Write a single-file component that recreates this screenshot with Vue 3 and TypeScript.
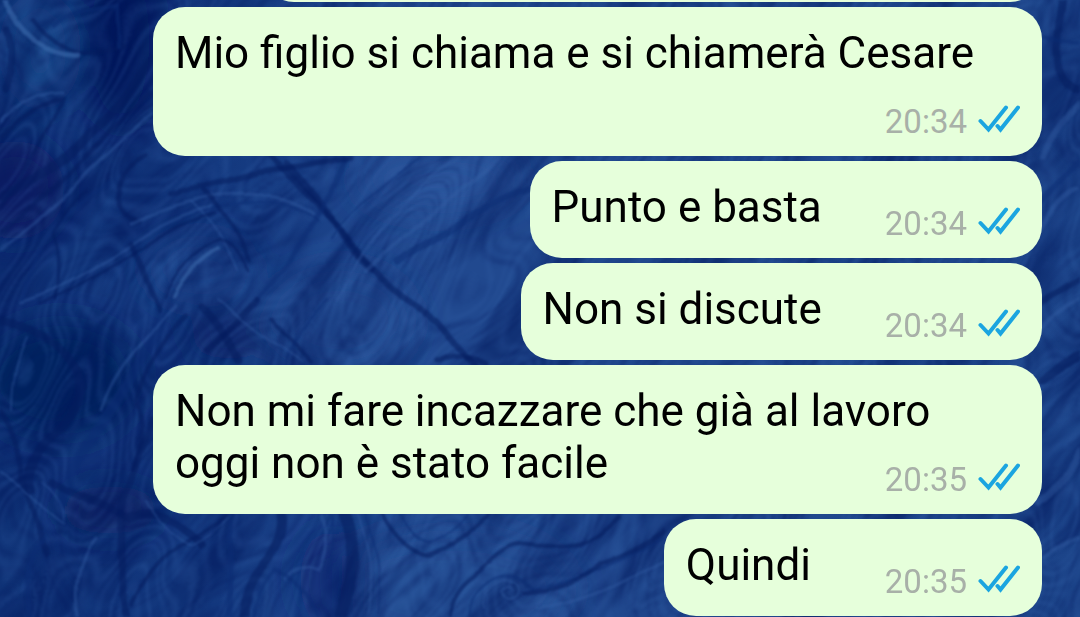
<script setup lang="ts">
interface Message {
  id: number
  text: string
  time: string
}

interface Stroke {
  d: string
  tone: 'dark' | 'deep' | 'light' | 'pale'
  width: number
}

const messages: Message[] = [
  { id: 1, text: 'Mio figlio si chiama e si chiamerà Cesare', time: '20:34' },
  { id: 2, text: 'Punto e basta', time: '20:34' },
  { id: 3, text: 'Non si discute', time: '20:34' },
  { id: 4, text: 'Non mi fare incazzare che già al lavoro oggi non è stato facile', time: '20:35' },
  { id: 5, text: 'Quindi\u00a0', time: '20:35' },
]

const strokes: Stroke[] = [
  // long diagonal vein and its branches
  { d: 'M268 150 Q292 176 322 214 Q350 240 385 276 Q420 305 450 342 L476 364', tone: 'deep', width: 6 },
  { d: 'M290 165 Q306 186 330 222 Q350 244 375 268', tone: 'deep', width: 7 },
  { d: 'M345 158 Q330 190 312 220 Q292 260 255 300', tone: 'dark', width: 5 },
  { d: 'M255 300 Q235 325 210 350', tone: 'deep', width: 6 },
  { d: 'M435 362 Q460 348 488 362', tone: 'deep', width: 5 },
  { d: 'M270 320 L308 362', tone: 'deep', width: 4 },
  { d: 'M330 300 Q300 330 286 360', tone: 'dark', width: 3 },
  // upper left sweeps
  { d: 'M152 60 Q120 110 85 140 Q55 175 0 200', tone: 'deep', width: 9 },
  { d: 'M150 92 Q100 140 68 176 Q35 205 0 236', tone: 'deep', width: 4 },
  { d: 'M152 112 Q100 155 70 190 Q40 222 0 250', tone: 'light', width: 3 },
  { d: 'M0 138 Q35 102 62 98 Q52 122 40 148 Q20 180 0 210', tone: 'deep', width: 4 },
  { d: 'M0 122 Q30 90 62 92', tone: 'light', width: 3 },
  { d: 'M35 20 Q58 48 80 52 Q105 52 124 48', tone: 'deep', width: 4 },
  { d: 'M5 0 Q20 26 38 42 Q60 56 78 54', tone: 'pale', width: 5 },
  { d: 'M55 25 Q68 10 116 8 L118 48', tone: 'dark', width: 4 },
  { d: 'M10 30 Q20 60 5 90', tone: 'deep', width: 7 },
  // folds beside the first bubble
  { d: 'M145 155 Q120 165 118 200 Q120 212 138 218', tone: 'deep', width: 5 },
  { d: 'M170 192 Q220 182 260 172 Q310 168 350 156', tone: 'deep', width: 5 },
  { d: 'M130 220 Q190 195 240 190 Q285 192 310 214', tone: 'light', width: 3 },
  { d: 'M150 230 Q195 208 240 200 Q290 196 315 222', tone: 'dark', width: 2 },
  { d: 'M200 190 Q240 220 248 260', tone: 'deep', width: 4 },
  { d: 'M190 200 Q225 225 236 270', tone: 'light', width: 2 },
  { d: 'M22 300 Q28 250 70 210 Q95 190 110 180', tone: 'dark', width: 4 },
  { d: 'M55 300 Q62 260 52 235 Q62 205 86 190', tone: 'deep', width: 3 },
  { d: 'M40 304 Q90 285 140 248 Q180 220 215 212', tone: 'deep', width: 3 },
  { d: 'M20 302 Q90 280 135 240 Q170 215 210 205', tone: 'light', width: 3 },
  { d: 'M130 242 Q145 280 158 312', tone: 'deep', width: 5 },
  { d: 'M165 300 Q180 260 222 240 Q240 245 246 270', tone: 'deep', width: 3 },
  { d: 'M175 300 Q190 268 220 250', tone: 'pale', width: 4 },
  { d: 'M500 158 Q430 210 370 270', tone: 'light', width: 4 },
  { d: 'M460 158 Q390 200 340 300', tone: 'light', width: 3 },
  { d: 'M530 190 Q470 210 400 260', tone: 'dark', width: 7 },
  { d: 'M420 158 Q360 190 330 240', tone: 'dark', width: 2 },
  // middle left tangle
  { d: 'M0 320 Q40 330 70 370 Q90 400 60 430 Q20 460 28 490', tone: 'deep', width: 9 },
  { d: 'M160 320 Q130 380 90 440 Q70 470 60 500', tone: 'dark', width: 10 },
  { d: 'M185 320 Q150 350 135 400 Q148 440 134 470', tone: 'deep', width: 5 },
  { d: 'M175 310 Q120 350 100 410', tone: 'light', width: 3 },
  { d: 'M25 340 Q10 370 10 410', tone: 'light', width: 2 },
  { d: 'M200 310 Q230 335 242 362', tone: 'deep', width: 7 },
  { d: 'M215 300 Q250 330 300 362', tone: 'light', width: 2 },
  { d: 'M0 410 Q20 440 20 480 Q30 520 48 555', tone: 'deep', width: 5 },
  { d: 'M0 470 Q40 510 60 525 Q65 500 40 480', tone: 'light', width: 2 },
  // lower left veins
  { d: 'M152 420 Q142 460 124 500 Q112 560 128 617', tone: 'deep', width: 7 },
  { d: 'M50 480 Q90 500 128 520 Q160 500 200 545', tone: 'deep', width: 8 },
  { d: 'M132 605 Q150 560 185 540 Q210 530 225 515', tone: 'deep', width: 4 },
  { d: 'M145 502 Q170 540 190 545 Q215 535 230 515', tone: 'light', width: 2 },
  { d: 'M30 617 Q25 570 42 540', tone: 'dark', width: 5 },
  { d: 'M80 617 Q70 570 95 540', tone: 'light', width: 3 },
  { d: 'M230 515 Q232 560 230 617', tone: 'dark', width: 5 },
  { d: 'M280 515 Q284 540 262 566 Q245 590 244 617', tone: 'deep', width: 9 },
  { d: 'M345 515 Q365 560 340 617', tone: 'deep', width: 13 },
  { d: 'M320 515 Q332 540 318 567 Q300 560 284 578', tone: 'light', width: 3 },
  { d: 'M332 515 Q336 545 328 575', tone: 'dark', width: 2 },
  { d: 'M358 515 Q382 560 368 617', tone: 'light', width: 2 },
  { d: 'M366 515 Q390 565 378 617', tone: 'dark', width: 2 },
  { d: 'M252 617 Q262 580 275 570 Q300 580 315 617', tone: 'dark', width: 4 },
  // lower centre rings
  { d: 'M384 513 Q405 550 430 556 Q450 550 490 513', tone: 'deep', width: 4 },
  { d: 'M402 513 Q415 540 432 543 Q450 538 470 513', tone: 'dark', width: 2 },
  { d: 'M448 617 Q450 592 472 577 Q500 543 520 542 Q550 546 580 542 Q600 535 620 515', tone: 'deep', width: 4 },
  { d: 'M468 617 Q468 592 494 578 Q518 570 536 590 Q580 580 664 536', tone: 'dark', width: 3 },
  { d: 'M528 595 Q570 590 600 562 Q630 552 664 530', tone: 'deep', width: 5 },
  { d: 'M484 610 Q478 588 504 580 Q528 582 520 598 Q508 606 502 592 Q512 584 516 592', tone: 'light', width: 2 },
  { d: 'M540 610 Q600 600 664 560', tone: 'light', width: 3 },
  // right margin
  { d: 'M1062 0 Q1056 40 1060 70 Q1066 86 1080 90', tone: 'deep', width: 8 },
  { d: 'M1044 38 Q1060 44 1080 44', tone: 'dark', width: 4 },
  { d: 'M1042 160 Q1056 120 1080 100', tone: 'light', width: 6 },
  { d: 'M1030 212 Q1060 190 1080 160', tone: 'dark', width: 6 },
  { d: 'M1042 230 Q1060 200 1080 190', tone: 'light', width: 5 },
  { d: 'M1030 310 Q1056 292 1080 280', tone: 'deep', width: 6 },
  { d: 'M1040 330 Q1060 310 1080 300', tone: 'light', width: 4 },
  { d: 'M1042 380 Q1060 365 1080 352', tone: 'deep', width: 9 },
  { d: 'M1040 500 Q1060 490 1080 450', tone: 'light', width: 7 },
  { d: 'M1042 560 Q1060 545 1080 540', tone: 'light', width: 4 },
]
</script>

<template>
  <main class="chat">
    <svg class="wallpaper" viewBox="0 0 1080 617" preserveAspectRatio="xMidYMid slice" aria-hidden="true">
      <defs>
        <linearGradient id="base" x1="0" y1="0" x2="1" y2="0">
          <stop offset="0" stop-color="#0f3276" />
          <stop offset="0.2" stop-color="#14397f" />
          <stop offset="0.4" stop-color="#21498f" />
          <stop offset="0.7" stop-color="#21498e" />
          <stop offset="1" stop-color="#1c4489" />
        </linearGradient>
        <filter id="soft" x="-50%" y="-50%" width="200%" height="200%">
          <feGaussianBlur stdDeviation="16" />
        </filter>
        <filter id="ink" x="0" y="0" width="1080" height="617" filterUnits="userSpaceOnUse" color-interpolation-filters="sRGB">
          <feTurbulence type="fractalNoise" baseFrequency="0.012" numOctaves="2" seed="4" result="warp" />
          <feDisplacementMap in="SourceGraphic" in2="warp" scale="14" xChannelSelector="R" yChannelSelector="G" />
          <feGaussianBlur stdDeviation="1" />
        </filter>
        <filter id="fibres" x="-600" y="-600" width="2300" height="1900" filterUnits="userSpaceOnUse" color-interpolation-filters="sRGB">
          <feTurbulence type="fractalNoise" baseFrequency="0.006 0.024" numOctaves="4" seed="11" />
          <feColorMatrix values="0 0 0 0 0.01  0 0 0 0 0.1  0 0 0 0 0.36  3 0 0 0 -1.25" />
        </filter>
        <filter id="marble" x="-600" y="-600" width="2300" height="1900" filterUnits="userSpaceOnUse" color-interpolation-filters="sRGB">
          <feTurbulence type="fractalNoise" baseFrequency="0.004 0.009" numOctaves="2" seed="23" />
          <feColorMatrix values="0 0 0 0 0.01  0 0 0 0 0.09  0 0 0 0 0.36  2 0 0 0 -0.5" />
          <feComponentTransfer>
            <feFuncA type="table" tableValues="0 0 1 0 0 0.7 0 0.9 0 0 0 1 0 0.6 0 0 0.9 0 0 0.6 0 1 0 0 0 0.8 0 0.7 0 0 1 0 0" />
          </feComponentTransfer>
          <feGaussianBlur stdDeviation="1" />
        </filter>
        <filter id="sheen" x="-600" y="-600" width="2300" height="1900" filterUnits="userSpaceOnUse" color-interpolation-filters="sRGB">
          <feTurbulence type="fractalNoise" baseFrequency="0.005 0.012" numOctaves="2" seed="7" />
          <feColorMatrix values="0 0 0 0 0.22  0 0 0 0 0.4  0 0 0 0 0.68  2 0 0 0 -0.5" />
          <feComponentTransfer>
            <feFuncA type="table" tableValues="0 0.8 0 0 1 0 0 0 0.7 0 0.9 0 0 1 0 0.6 0 0 0.8 0 0 1 0 0.6 0 0" />
          </feComponentTransfer>
          <feGaussianBlur stdDeviation="1" />
        </filter>
      </defs>
      <rect width="1080" height="617" fill="url(#base)" />
      <g filter="url(#soft)">
        <ellipse cx="120" cy="40" rx="40" ry="90" fill="#04195a" />
        <ellipse cx="40" cy="50" rx="26" ry="50" fill="#1f4f92" />
        <ellipse cx="15" cy="190" rx="50" ry="50" fill="#071f63" />
        <ellipse cx="60" cy="380" rx="80" ry="60" fill="#06215f" />
        <ellipse cx="230" cy="335" rx="40" ry="24" fill="#0a2769" />
        <ellipse cx="110" cy="510" rx="50" ry="24" fill="#082262" />
        <ellipse cx="200" cy="270" rx="50" ry="30" fill="#214b92" />
        <ellipse cx="340" cy="320" rx="70" ry="50" fill="#265197" />
        <ellipse cx="440" cy="180" rx="80" ry="30" fill="#2a549b" />
        <ellipse cx="450" cy="590" rx="120" ry="60" fill="#265196" />
        <ellipse cx="330" cy="580" rx="30" ry="50" fill="#082870" />
      </g>
      <g transform="rotate(-52 300 300)" opacity="0.5">
        <rect x="-600" y="-600" width="2300" height="1900" filter="url(#fibres)" />
      </g>
      <g transform="rotate(-50 300 300)" opacity="0.26">
        <rect x="-600" y="-600" width="2300" height="1900" filter="url(#marble)" />
      </g>
      <g transform="rotate(-62 300 300)" opacity="0.24">
        <rect x="-600" y="-600" width="2300" height="1900" filter="url(#sheen)" />
      </g>
      <g filter="url(#ink)" fill="none" stroke-linecap="round">
        <path
          v-for="(stroke, index) in strokes"
          :key="index"
          :d="stroke.d"
          :class="['vein', stroke.tone]"
          :stroke-width="stroke.width"
        />
      </g>
    </svg>

    <div class="previous" aria-hidden="true"><div class="bubble previous-bubble"></div></div>

    <ol class="thread">
      <li v-for="message in messages" :key="message.id" class="bubble">
        <span class="text">{{ message.text }}</span>
        <span class="meta">
          <time>{{ message.time }}</time>
          <svg class="ticks" viewBox="0 0 42 28" role="img" aria-label="Letto">
            <path d="M2.5 16 10.5 24.5 28 2.5" />
            <path d="M19.5 21 22.5 24.5 40 2.5" />
          </svg>
        </span>
      </li>
    </ol>
  </main>
</template>

<style>
body {
  margin: 0;
  background: #153c83;
}
</style>

<style scoped>
.chat {
  position: relative;
  min-height: 100vh;
  overflow: hidden;
  box-sizing: border-box;
  padding: 0 38px 0 153px;
  font-family: Roboto, "Noto Sans", sans-serif;
}

.wallpaper {
  position: absolute;
  inset: 0;
  width: 100%;
  height: 100%;
}

.vein {
  opacity: 0.55;
}

.dark {
  stroke: #0b2c72;
}

.deep {
  stroke: #041b5c;
}

.light {
  stroke: #3560a6;
  opacity: 0.4;
}

.pale {
  stroke: #3f70b0;
}

.previous {
  position: relative;
  display: flex;
  align-items: flex-end;
  justify-content: flex-end;
  height: 2px;
  overflow: hidden;
}

.previous-bubble {
  flex: none;
  width: 780px;
  height: 97px;
}

.thread {
  position: relative;
  display: flex;
  flex-direction: column;
  align-items: flex-end;
  gap: 5px;
  margin: 5px 0 0;
  padding: 0;
  list-style: none;
}

.bubble {
  display: flow-root;
  box-sizing: border-box;
  max-width: 100%;
  padding: 20px 22px 14px;
  border-radius: 32px;
  background: #e6ffdb;
}

.text {
  color: #000;
  font-size: 44px;
  line-height: 52px;
}

.meta {
  float: right;
  display: flex;
  align-items: center;
  gap: 11px;
  margin: 23px 0 0 63px;
  color: #a8b0a8;
  font-size: 33px;
  line-height: 40px;
}

.ticks {
  width: 42px;
  height: 28px;
  margin-bottom: 6px;
  fill: none;
  stroke: #1ba5e0;
  stroke-width: 4;
  stroke-linecap: round;
}
</style>
